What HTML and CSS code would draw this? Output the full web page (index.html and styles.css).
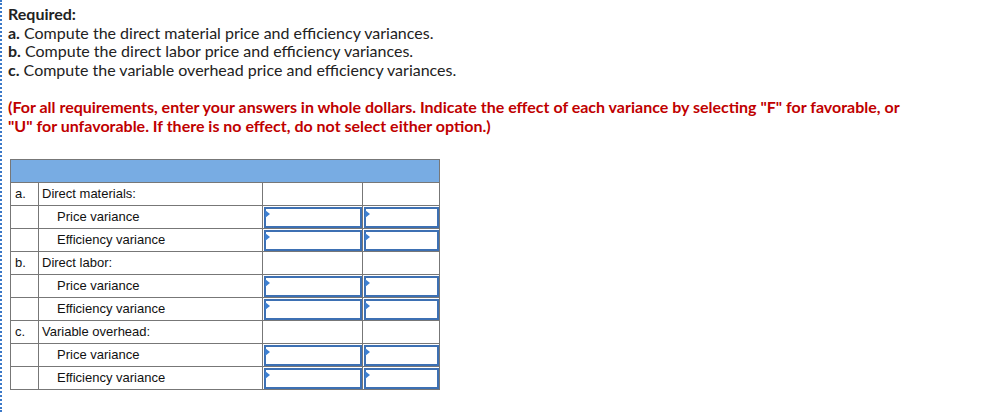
FILE: index.html
```html
<!DOCTYPE html>
<html>
<head>
<meta charset="utf-8">
<link rel="stylesheet" href="styles.css">
</head>
<body>
<div class="page">
  <div class="req">
    <div class="req-title">Required:</div>
    <div><b>a.</b> Compute the direct material price and efficiency variances.</div>
    <div><b>b.</b> Compute the direct labor price and efficiency variances.</div>
    <div><b>c.</b> Compute the variable overhead price and efficiency variances.</div>
  </div>
  <p class="note">(For all requirements, enter your answers in whole dollars. Indicate the effect of each variance by selecting "F" for favorable, or "U" for unfavorable. If there is no effect, do not select either option.)</p>
  <table class="grid">
    <tr class="head"><td colspan="4"></td></tr>
    <tr><td class="lab">a.</td><td class="desc">Direct materials:</td><td class="c3"></td><td class="c4"></td></tr>
    <tr><td class="lab"></td><td class="desc ind">Price variance</td><td class="c3"><div class="inp"></div></td><td class="c4"><div class="inp"></div></td></tr>
    <tr><td class="lab"></td><td class="desc ind">Efficiency variance</td><td class="c3"><div class="inp"></div></td><td class="c4"><div class="inp"></div></td></tr>
    <tr><td class="lab">b.</td><td class="desc">Direct labor:</td><td class="c3"></td><td class="c4"></td></tr>
    <tr><td class="lab"></td><td class="desc ind">Price variance</td><td class="c3"><div class="inp"></div></td><td class="c4"><div class="inp"></div></td></tr>
    <tr><td class="lab"></td><td class="desc ind">Efficiency variance</td><td class="c3"><div class="inp"></div></td><td class="c4"><div class="inp"></div></td></tr>
    <tr><td class="lab">c.</td><td class="desc">Variable overhead:</td><td class="c3"></td><td class="c4"></td></tr>
    <tr><td class="lab"></td><td class="desc ind">Price variance</td><td class="c3"><div class="inp"></div></td><td class="c4"><div class="inp"></div></td></tr>
    <tr><td class="lab"></td><td class="desc ind">Efficiency variance</td><td class="c3"><div class="inp"></div></td><td class="c4"><div class="inp"></div></td></tr>
  </table>
</div>
</body>
</html>
```

FILE: styles.css
```css
html, body {
  margin: 0;
  padding: 0;
  background: #fff;
}
.page {
  border-left: 2px dotted #3a78c8;
  min-height: 412px;
  box-sizing: border-box;
  padding: 5px 0 0 6px;
  font-family: Lato, "Open Sans", sans-serif;
  color: #222;
}
.req {
  font-size: 16px;
  line-height: 18.7px;
}
.req-title {
  font-weight: bold;
}
.req b {
  font-weight: bold;
}
.note {
  margin: 17px 0 0 0;
  font-size: 16px;
  line-height: 19px;
  font-weight: bold;
  color: #c00000;
  width: 910px;
}
.grid {
  margin: 24px 0 0 2px;
  border-collapse: collapse;
  font-family: "Liberation Sans", Arial, sans-serif;
  font-size: 13px;
  color: #111;
}
.grid td {
  border: 1px solid #777;
  height: 23px;
  padding: 0;
  box-sizing: border-box;
}
.grid tr.head td {
  background: #78ace3;
  height: 23px;
}
.lab {
  width: 28px;
  padding-left: 4px !important;
}
.desc {
  width: 224px;
  padding-left: 3px !important;
}
.desc.ind {
  padding-left: 18px !important;
}
.c3 { width: 100px; }
.c4 { width: 77px; }
.inp {
  position: relative;
  height: 21px;
  box-sizing: border-box;
  border: 2px solid #3d70b3;
  margin: 1px 0 0 1px;
}
.inp::before {
  content: "";
  position: absolute;
  left: -1px;
  top: 1px;
  border-left: 5px solid #3d7fd0;
  border-top: 4px solid transparent;
  border-bottom: 4px solid transparent;
}
```
